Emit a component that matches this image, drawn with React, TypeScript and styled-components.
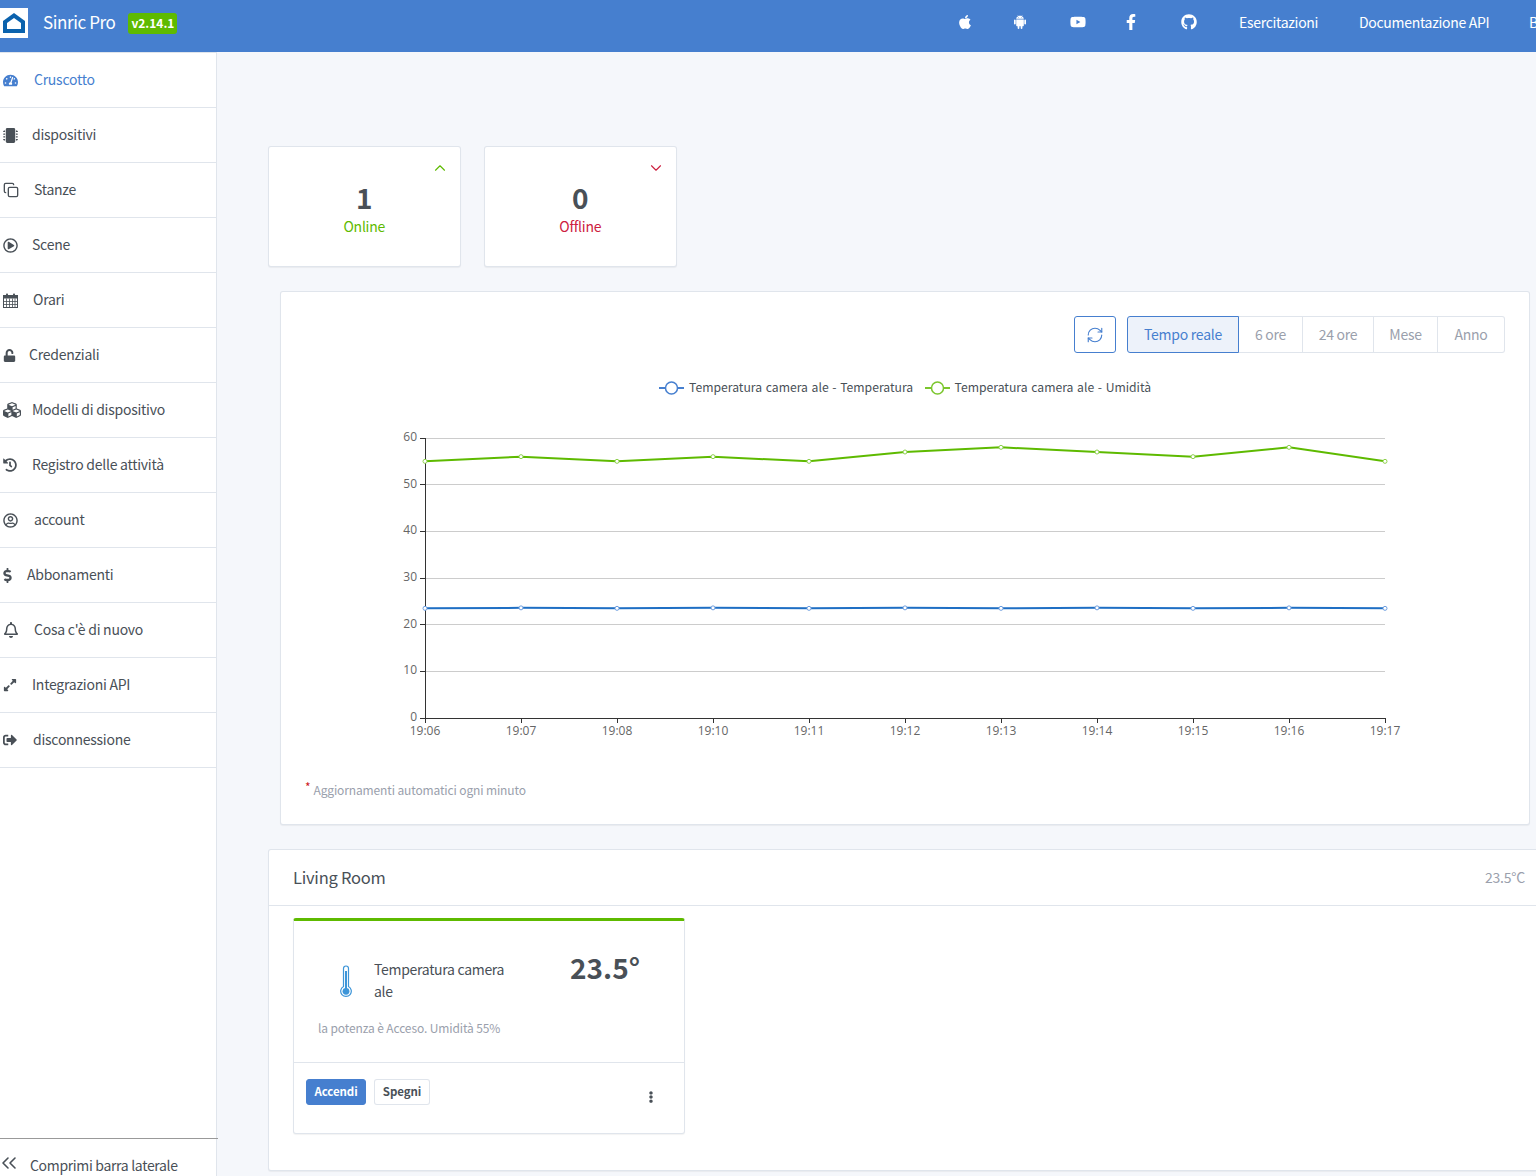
import React from 'react';
import styled, { createGlobalStyle } from 'styled-components';
import {
  FaApple,
  FaCubes,
  FaDollarSign,
  FaEllipsisV,
  FaExpandAlt,
  FaFacebookF,
  FaGithub,
  FaHistory,
  FaMicrochip,
  FaRegBell,
  FaRegPlayCircle,
  FaRegUserCircle,
  FaSignOutAlt,
  FaTachometerAlt,
  FaUnlock,
  FaYoutube,
} from 'react-icons/fa';
import { AiFillAndroid } from 'react-icons/ai';
import { ChevronDown, ChevronsLeft, ChevronUp, Copy, RefreshCw } from 'lucide-react';

const FONT = '"Noto Sans CJK SC", "Noto Sans", "Liberation Sans", sans-serif';

const GlobalStyle = createGlobalStyle`
  html, body {
    margin: 0;
    padding: 0;
    height: 1176px;
    overflow: hidden;
    background: #f5f7fb;
    font-family: ${FONT};
    font-size: 14px;
    color: #495057;
  }
  * {
    box-sizing: border-box;
  }
`;

const Page = styled.div`
  width: 1536px;
  height: 1176px;
  overflow: hidden;
  display: flex;
  flex-direction: column;
`;

const Header = styled.header`
  height: 52px;
  flex: none;
  background: #467fcf;
  display: flex;
  align-items: flex-start;
  color: #fff;
  overflow: hidden;
`;

const LogoBox = styled.div`
  width: 28px;
  height: 30px;
  margin-top: 8px;
  background: #fff;
  display: flex;
  align-items: center;
  justify-content: center;
`;

const Brand = styled.div`
  margin: 11px 0 0 15px;
  font-size: 17px;
  letter-spacing: -0.4px;
  line-height: 22px;
`;

const Version = styled.span`
  margin: 13px 0 0 13px;
  height: 21px;
  width: 49px;
  text-align: center;
  border-radius: 3px;
  background: #5eba00;
  font-size: 12px;
  font-weight: 700;
  line-height: 20px;
`;

const TopNav = styled.nav`
  margin-left: auto;
  margin-right: -12px;
  display: flex;
  align-items: center;
  height: 44px;
  flex: none;
`;

const TopIcon = styled.span<{ $width: number }>`
  width: ${({ $width }) => $width}px;
  display: flex;
  font-size: 16px;
`;

const TopLink = styled.span<{ $width: number }>`
  width: ${({ $width }) => $width}px;
  font-size: 14px;
  letter-spacing: -0.3px;
  white-space: nowrap;
  overflow: hidden;
`;

const Body = styled.div`
  flex: 1;
  display: flex;
  min-height: 0;
`;

const Sidebar = styled.aside`
  width: 217px;
  flex: none;
  background: #fff;
  border-top: 1px solid rgba(0, 40, 100, 0.12);
  border-right: 1px solid rgba(0, 40, 100, 0.12);
  display: flex;
  flex-direction: column;
`;

const MenuItem = styled.div<{ $active?: boolean }>`
  height: 55px;
  flex: none;
  padding-left: 3px;
  display: flex;
  align-items: center;
  border-bottom: 1px solid rgba(0, 40, 100, 0.12);
  font-size: 14px;
  letter-spacing: -0.25px;
  color: ${({ $active }) => ($active ? '#467fcf' : '#495057')};
`;

const MenuLabel = styled.span`
  padding-bottom: 2px;
`;

const MenuIcon = styled.span<{ $width: number; $size?: number }>`
  width: ${({ $width }) => $width}px;
  flex: none;
  display: flex;
  font-size: ${({ $size }) => $size ?? 15}px;
`;

const DollarIcon = styled(FaDollarSign)`
  margin-left: -3px;
`;

const CalendarIcon: React.FC = () => (
  <svg width="15" height="15" viewBox="0 0 15 15">
    <rect x="0.5" y="2.5" width="14" height="12" fill="#fff" stroke="#495057" />
    <rect x="0.5" y="2.5" width="14" height="3" fill="#495057" />
    <path
      d="M3.5 5.5 V14.5 M6.5 5.5 V14.5 M9.5 5.5 V14.5 M12 5.5 V14.5 M0.5 8.5 H14.5 M0.5 11.5 H14.5"
      stroke="#495057"
      strokeWidth={0.8}
    />
    <rect x="3" y="0.5" width="2" height="3.5" rx="0.8" fill="#495057" />
    <rect x="10" y="0.5" width="2" height="3.5" rx="0.8" fill="#495057" />
  </svg>
);

const Collapse = styled.div`
  margin-top: auto;
  width: 218px;
  height: 38px;
  flex: none;
  border-top: 1px solid #999;
  padding: 10px 0 0 3px;
  display: flex;
  align-items: flex-start;
  font-size: 14px;
  letter-spacing: -0.33px;
  line-height: 32px;
  white-space: nowrap;
`;

const CollapseIcon = styled.span`
  width: 33px;
  flex: none;
  display: flex;
  margin: 2px 0 0 -6px;
`;

const Main = styled.main`
  flex: 1;
  min-width: 0;
  padding: 94px 0 0 51px;
  display: flex;
  flex-direction: column;
  overflow: hidden;
`;

const StatRow = styled.div`
  display: flex;
  gap: 23.5px;
`;

const Card = styled.div`
  background: #fff;
  border: 1px solid rgba(0, 40, 100, 0.12);
  border-radius: 3px;
  box-shadow: 0 1px 1px rgba(0, 0, 0, 0.05);
`;

const StatCard = styled(Card)`
  position: relative;
  width: 192.5px;
  height: 121px;
  padding-top: 33px;
  text-align: center;
`;

const StatTrend = styled.span<{ $color: string }>`
  position: absolute;
  top: 12px;
  right: 11px;
  display: flex;
  color: ${({ $color }) => $color};
`;

const StatValue = styled.div`
  font-size: 28px;
  font-weight: 700;
  line-height: 34px;
  color: #495057;
`;

const StatLabel = styled.div<{ $color: string }>`
  font-size: 14px;
  letter-spacing: -0.25px;
  line-height: 22px;
  margin-top: 1px;
  color: ${({ $color }) => $color};
`;

const ChartCard = styled(Card)`
  width: 1250px;
  height: 534px;
  margin: 24px 0 0 12px;
  padding: 24px 24px 0 24px;
`;

const ChartTools = styled.div`
  display: flex;
  justify-content: flex-end;
  gap: 12px;
`;

const RefreshButton = styled.button`
  width: 42px;
  height: 37px;
  padding: 0;
  display: flex;
  align-items: center;
  justify-content: center;
  background: #fff;
  color: #467fcf;
  border: 1px solid #467fcf;
  border-radius: 3px;
`;

const RangeGroup = styled.div`
  display: flex;
`;

const RangeButton = styled.button<{ $active?: boolean; $width: number }>`
  width: ${({ $width }) => $width}px;
  height: 37px;
  padding: 0 0 2px;
  margin-left: -1px;
  font-family: ${FONT};
  font-size: 14px;
  letter-spacing: -0.25px;
  color: ${({ $active }) => ($active ? '#467fcf' : '#9aa0ac')};
  background: ${({ $active }) => ($active ? '#edf2fa' : '#fff')};
  border: 1px solid ${({ $active }) => ($active ? '#467fcf' : 'rgba(0, 40, 100, 0.12)')};
  position: relative;
  z-index: ${({ $active }) => ($active ? 1 : 0)};
  &:first-child {
    border-radius: 3px 0 0 3px;
  }
  &:last-child {
    border-radius: 0 3px 3px 0;
  }
`;

const ChartSvg = styled.svg`
  display: block;
  margin: 0 0 0 -24px;
`;

const ChartNote = styled.div`
  font-size: 12px;
  letter-spacing: -0.13px;
  line-height: 18px;
  color: #9aa0ac;
`;

const Asterisk = styled.span`
  color: #cd201f;
  position: relative;
  top: -3px;
  margin-right: 3px;
`;

const RoomCard = styled(Card)`
  width: 1300px;
  height: 322px;
  margin-top: 24px;
  flex: none;
`;

const RoomHeader = styled.div`
  height: 56px;
  padding: 0 42px 2px 24px;
  display: flex;
  align-items: center;
  justify-content: space-between;
  border-bottom: 1px solid rgba(0, 40, 100, 0.12);
`;

const RoomTitle = styled.h3`
  margin: 0;
  font-size: 16.5px;
  letter-spacing: -0.25px;
  font-weight: 400;
  line-height: 22px;
`;

const RoomTemp = styled.span`
  font-size: 14px;
  letter-spacing: -0.2px;
  color: #9aa0ac;
`;

const RoomBody = styled.div`
  padding: 12px 24px 0;
`;

const DeviceCard = styled(Card)`
  width: 392px;
  height: 216px;
  border-top: 3px solid #5eba00;
  display: flex;
  flex-direction: column;
`;

const DeviceBody = styled.div`
  height: 142px;
  padding: 0 24px;
  border-bottom: 1px solid rgba(0, 40, 100, 0.12);
`;

const DeviceTop = styled.div`
  display: flex;
  height: 97px;
  align-items: flex-start;
`;

const ThermoBox = styled.div`
  width: 56px;
  flex: none;
  margin-top: 44px;
  padding-left: 22px;
  display: flex;
`;

const DeviceName = styled.div`
  width: 148px;
  flex: none;
  margin-top: 37px;
  font-size: 14px;
  letter-spacing: -0.3px;
  line-height: 22px;
`;

const DeviceValue = styled.div`
  margin: 26px 0 0 48px;
  font-size: 28px;
  font-weight: 700;
  line-height: 40px;
  white-space: nowrap;
`;

const DeviceStatus = styled.div`
  font-size: 12px;
  letter-spacing: -0.12px;
  line-height: 20px;
  color: #9aa0ac;
`;

const DeviceFooter = styled.div`
  flex: 1;
  position: relative;
  padding: 16px 12px;
  display: flex;
  align-items: flex-start;
  gap: 8px;
`;

const SmallButton = styled.button<{ $primary?: boolean; $width: number }>`
  width: ${({ $width }) => $width}px;
  height: 26px;
  padding: 0 0 2px;
  font-family: ${FONT};
  font-size: 11.5px;
  letter-spacing: -0.1px;
  font-weight: 600;
  line-height: 22px;
  border-radius: 3px;
  color: ${({ $primary }) => ($primary ? '#fff' : '#495057')};
  background: ${({ $primary }) => ($primary ? '#467fcf' : '#fff')};
  border: 1px solid ${({ $primary }) => ($primary ? '#467fcf' : 'rgba(0, 40, 100, 0.12)')};
`;

const MoreIcon = styled.span`
  position: absolute;
  top: 28px;
  right: 27px;
  display: flex;
  font-size: 12px;
  color: #495057;
`;

const menu = [
  { label: 'Cruscotto', icon: <FaTachometerAlt />, width: 31, active: true },
  { label: 'dispositivi', icon: <FaMicrochip />, width: 29 },
  { label: 'Stanze', icon: <Copy size={16} strokeWidth={2} />, width: 31 },
  { label: 'Scene', icon: <FaRegPlayCircle />, width: 29 },
  { label: 'Orari', icon: <CalendarIcon />, width: 30 },
  { label: 'Credenziali', icon: <FaUnlock />, width: 26, size: 13 },
  { label: 'Modelli di dispositivo', icon: <FaCubes />, width: 29, size: 18 },
  { label: 'Registro delle attività', icon: <FaHistory />, width: 29, size: 14 },
  { label: 'account', icon: <FaRegUserCircle />, width: 31 },
  { label: 'Abbonamenti', icon: <DollarIcon />, width: 24 },
  { label: "Cosa c'è di nuovo", icon: <FaRegBell />, width: 31, size: 16 },
  { label: 'Integrazioni API', icon: <FaExpandAlt />, width: 29, size: 14 },
  { label: 'disconnessione', icon: <FaSignOutAlt />, width: 30, size: 14 },
];

const ranges = [
  { label: 'Tempo reale', width: 112, active: true },
  { label: '6 ore', width: 65 },
  { label: '24 ore', width: 72 },
  { label: 'Mese', width: 65 },
  { label: 'Anno', width: 68 },
];

const times = ['19:06', '19:07', '19:08', '19:10', '19:11', '19:12', '19:13', '19:14', '19:15', '19:16', '19:17'];
const humidity = [55, 56, 55, 56, 55, 57, 58, 57, 56, 58, 55];
const temperature = [23.5, 23.6, 23.5, 23.6, 23.5, 23.6, 23.5, 23.6, 23.5, 23.6, 23.5];

// chart coordinates are relative to the svg, which starts at the card's left edge
const X0 = 144;
const STEP_X = 96;
const Y0 = 365;
const UNIT_Y = 280 / 60;
const xAt = (i: number) => X0 + i * STEP_X;
const yAt = (v: number) => Y0 - v * UNIT_Y;
// grid lines sit on whole pixels
const lineAt = (v: number) => Math.floor(yAt(v)) + 0.5;

const AXIS_FONT = '"Open Sans", "Noto Sans", sans-serif';

const Series: React.FC<{ data: number[]; color: string; light: string }> = ({ data, color, light }) => (
  <g>
    <polyline
      points={data.map((v, i) => `${xAt(i)},${yAt(v)}`).join(' ')}
      fill="none"
      stroke={color}
      strokeWidth={2}
    />
    {data.map((v, i) => (
      <circle key={i} cx={xAt(i)} cy={yAt(v)} r={2} fill="#fff" stroke={light} strokeWidth={1} />
    ))}
  </g>
);

const LegendMark: React.FC<{ x: number; color: string }> = ({ x, color }) => (
  <g>
    <line x1={x} y1={35} x2={x + 25} y2={35} stroke={color} strokeWidth={2} />
    <circle cx={x + 12.5} cy={35} r={6} fill="#fff" stroke={color} strokeWidth={1.5} />
  </g>
);

const Chart: React.FC = () => (
  <ChartSvg width={1200} height={428} viewBox="0 0 1200 428" fontFamily={FONT}>
    <LegendMark x={378} color="#467fcf" />
    <text x={408} y={39} fontSize={12.2} wordSpacing={0.9} fill="#495057">
      Temperatura camera ale - Temperatura
    </text>
    <LegendMark x={644} color="#7bc62d" />
    <text x={673.5} y={39} fontSize={12.2} wordSpacing={0.9} fill="#495057">
      Temperatura camera ale - Umidità
    </text>
    {[0, 10, 20, 30, 40, 50, 60].map((v) => (
      <g key={v}>
        {v > 0 && <line x1={X0} y1={lineAt(v)} x2={xAt(10)} y2={lineAt(v)} stroke="#ccc" />}
        <line x1={X0 - 5} y1={lineAt(v)} x2={X0} y2={lineAt(v)} stroke="#333" />
        <text x={X0 - 8} y={yAt(v) + 3} fontSize={12} textAnchor="end" fill="#666" fontFamily={AXIS_FONT}>
          {v}
        </text>
      </g>
    ))}
    <line x1={X0 + 0.5} y1={yAt(60)} x2={X0 + 0.5} y2={Y0 + 5} stroke="#333" />
    <line x1={X0} y1={Y0 + 0.5} x2={xAt(10)} y2={Y0 + 0.5} stroke="#333" />
    {times.map((t, i) => (
      <g key={t}>
        <line x1={xAt(i) + 0.5} y1={Y0} x2={xAt(i) + 0.5} y2={Y0 + 5} stroke="#333" />
        <text x={xAt(i)} y={Y0 + 17} fontSize={12} textAnchor="middle" fill="#666" fontFamily={AXIS_FONT}>
          {t}
        </text>
      </g>
    ))}
    <Series data={humidity} color="#5eba00" light="#8fd14f" />
    <Series data={temperature} color="#1f6fc4" light="#6f9fe0" />
  </ChartSvg>
);

const Logo: React.FC = () => (
  <svg width="24" height="22" viewBox="0 0 24 22">
    <path d="M12 1 L23 9 V21 H1 V9 Z" fill="#0b62ad" />
    <path d="M12 6 L19 11 V17 H5 V11 Z" fill="#fff" />
  </svg>
);

const Thermometer: React.FC = () => (
  <svg width="12" height="33" viewBox="0 0 12 33">
    <path
      d="M3.5 3.5 a2.5 2.5 0 0 1 5 0 V21.5 a5.3 5.3 0 1 1 -5 0 Z"
      fill="#fff"
      stroke="#3d95d8"
      strokeWidth={1.2}
    />
    <rect x={5} y={6} width={2} height={18} fill="#3d95d8" />
    <circle cx={6} cy={26.3} r={3.4} fill="#3d95d8" />
  </svg>
);

const App: React.FC = () => (
  <Page>
    <GlobalStyle />
    <Header>
      <LogoBox>
        <Logo />
      </LogoBox>
      <Brand>Sinric Pro</Brand>
      <Version>v2.14.1</Version>
      <TopNav>
        <TopIcon $width={55}>
          <FaApple />
        </TopIcon>
        <TopIcon $width={58}>
          <AiFillAndroid />
        </TopIcon>
        <TopIcon $width={53}>
          <FaYoutube />
        </TopIcon>
        <TopIcon $width={58}>
          <FaFacebookF />
        </TopIcon>
        <TopIcon $width={58}>
          <FaGithub />
        </TopIcon>
        <TopLink $width={120}>Esercitazioni</TopLink>
        <TopLink $width={170}>Documentazione API</TopLink>
        <TopLink $width={19}>Blog</TopLink>
      </TopNav>
    </Header>
    <Body>
      <Sidebar>
        {menu.map((item) => (
          <MenuItem key={item.label} $active={item.active}>
            <MenuIcon $width={item.width} $size={item.size}>
              {item.icon}
            </MenuIcon>
            <MenuLabel>{item.label}</MenuLabel>
          </MenuItem>
        ))}
        <Collapse>
          <CollapseIcon>
            <ChevronsLeft size={24} strokeWidth={1.6} />
          </CollapseIcon>
          <span>Comprimi barra laterale</span>
        </Collapse>
      </Sidebar>
      <Main>
        <StatRow>
          <StatCard>
            <StatTrend $color="#5eba00">
              <ChevronUp size={18} strokeWidth={1.5} />
            </StatTrend>
            <StatValue>1</StatValue>
            <StatLabel $color="#5eba00">Online</StatLabel>
          </StatCard>
          <StatCard>
            <StatTrend $color="#cd2040">
              <ChevronDown size={18} strokeWidth={1.5} />
            </StatTrend>
            <StatValue>0</StatValue>
            <StatLabel $color="#cd2040">Offline</StatLabel>
          </StatCard>
        </StatRow>
        <ChartCard>
          <ChartTools>
            <RefreshButton>
              <RefreshCw size={18} strokeWidth={1.5} />
            </RefreshButton>
            <RangeGroup>
              {ranges.map((r) => (
                <RangeButton key={r.label} $active={r.active} $width={r.width}>
                  {r.label}
                </RangeButton>
              ))}
            </RangeGroup>
          </ChartTools>
          <Chart />
          <ChartNote>
            <Asterisk>*</Asterisk>
            Aggiornamenti automatici ogni minuto
          </ChartNote>
        </ChartCard>
        <RoomCard>
          <RoomHeader>
            <RoomTitle>Living Room</RoomTitle>
            <RoomTemp>23.5°C</RoomTemp>
          </RoomHeader>
          <RoomBody>
            <DeviceCard>
              <DeviceBody>
                <DeviceTop>
                  <ThermoBox>
                    <Thermometer />
                  </ThermoBox>
                  <DeviceName>Temperatura camera ale</DeviceName>
                  <DeviceValue>23.5°</DeviceValue>
                </DeviceTop>
                <DeviceStatus>la potenza è Acceso. Umidità 55%</DeviceStatus>
              </DeviceBody>
              <DeviceFooter>
                <SmallButton $primary $width={60}>
                  Accendi
                </SmallButton>
                <SmallButton $width={56}>Spegni</SmallButton>
                <MoreIcon>
                  <FaEllipsisV />
                </MoreIcon>
              </DeviceFooter>
            </DeviceCard>
          </RoomBody>
        </RoomCard>
      </Main>
    </Body>
  </Page>
);

export default App;
